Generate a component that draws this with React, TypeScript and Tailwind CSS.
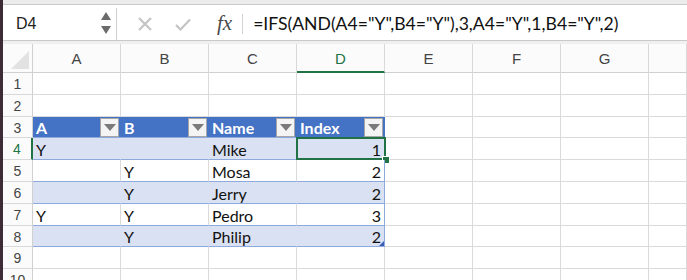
import React from 'react';

const COLS = ['A', 'B', 'C', 'D', 'E', 'F', 'G', 'H'];
const ROW_H = ['h-[22px]', 'h-[22px]', 'h-[21px]', 'h-[22px]', 'h-[22px]', 'h-[22px]', 'h-[22px]', 'h-[21px]', 'h-[22px]', 'h-[22px]'];

type Row = { a: string; b: string; c: string; d: string };
const DATA: Row[] = [
  { a: 'Y', b: '', c: 'Mike', d: '1' },
  { a: '', b: 'Y', c: 'Mosa', d: '2' },
  { a: '', b: 'Y', c: 'Jerry', d: '2' },
  { a: 'Y', b: 'Y', c: 'Pedro', d: '3' },
  { a: '', b: 'Y', c: 'Philip', d: '2' },
];

const cellFont = "font-['Lato','Liberation_Sans',sans-serif] text-[16px] text-[#111] pt-[2px]";

function Dropdown() {
  return (
    <div className="absolute right-[2px] top-[1px] flex h-[19px] w-[19px] items-center justify-center border border-[#a6a6a6] bg-[#f4f4f4]">
      <svg width="12" height="7" viewBox="0 0 12 7">
        <path d="M0 0 L12 0 L6 7 Z" fill="#7a7a7a" />
      </svg>
    </div>
  );
}

function RowHeader({ n, active }: { n: number; active?: boolean }) {
  return (
    <div
      className={`flex w-[30px] shrink-0 items-center justify-center border-b border-[#d9d9d9] bg-[#fbfbfb] pt-[2px] font-['Liberation_Sans',sans-serif] text-[14px] ${
        active ? 'border-r-2 border-r-[#217346] text-[#217346]' : 'border-r border-r-[#d0d0d0] text-[#444]'
      }`}
    >
      {n}
    </div>
  );
}

function EmptyCell({ last }: { last?: boolean }) {
  return <div className={`${last ? 'flex-1' : 'w-[88px]'} shrink-0 border-b border-r border-[#dadada] bg-white`} />;
}

export default function App() {
  return (
    <div className="flex h-[280px] w-[687px] overflow-hidden bg-white">
      <div className="w-[3px] shrink-0 bg-[#3d2b36]" />
      <div className="flex flex-1 flex-col">
        {/* top strip */}
        <div className="h-[5px] shrink-0 border-b border-[#c9c9c9] bg-[#ececec]" />

        {/* formula bar */}
        <div className="flex h-[36px] shrink-0 items-center border-b border-[#c9c9c9] bg-white pt-[3px]">
          <div className="relative flex h-full w-[114px] items-center border-r border-[#cfcfcf] pl-[13px] font-['Liberation_Sans',sans-serif] text-[16px] text-[#222]">
            D4
            <div className="absolute right-[5px] top-[4px] flex flex-col gap-[6px]">
              <svg width="10" height="8" viewBox="0 0 10 8">
                <path d="M5 0 L10 8 L0 8 Z" fill="#6b6b6b" />
              </svg>
              <svg width="10" height="8" viewBox="0 0 10 8">
                <path d="M0 0 L10 0 L5 8 Z" fill="#6b6b6b" />
              </svg>
            </div>
          </div>
          <div className="ml-[21px] flex items-center">
            <svg width="14" height="14" viewBox="0 0 14 14">
              <path d="M1 1 L13 13 M13 1 L1 13" stroke="#c4c4c4" strokeWidth="2.2" />
            </svg>
          </div>
          <div className="ml-[23px] flex items-center">
            <svg width="16" height="13" viewBox="0 0 16 13">
              <path d="M1 7 L5.5 11.5 L15 1.5" stroke="#c4c4c4" strokeWidth="2.2" fill="none" />
            </svg>
          </div>
          <div className="ml-[26px] font-['Liberation_Serif',serif] text-[21px] italic text-[#4a4a4a]">fx</div>
          <div className="ml-[10px] h-[20px] w-px bg-[#d4d4d4]" />
          <div className="ml-[10px] font-['Lato','Liberation_Sans',sans-serif] text-[17.6px] text-[#111]">
            =IFS(AND(A4="Y",B4="Y"),3,A4="Y",1,B4="Y",2)
          </div>
        </div>

        {/* gap */}
        <div className="h-[3px] shrink-0 bg-[#f0f0f0]" />

        {/* column headers */}
        <div className="flex h-[29px] shrink-0">
          <div className="relative w-[30px] shrink-0 border-b border-r border-[#d0d0d0] bg-[#fbfbfb]">
            <svg className="absolute bottom-[3px] right-[3px]" width="18" height="18" viewBox="0 0 18 18">
              <path d="M18 0 L18 18 L0 18 Z" fill="#e2e2e2" />
            </svg>
          </div>
          {COLS.map((c, i) => (
            <div
              key={c}
              className={`${i === 7 ? 'flex-1' : 'w-[88px]'} flex shrink-0 items-center justify-center border-r border-[#d9d9d9] bg-[#fbfbfb] pt-[3px] font-['Liberation_Sans',sans-serif] text-[15px] ${
                c === 'D' ? 'border-b-2 border-b-[#217346] text-[#217346]' : 'border-b border-b-[#d0d0d0] text-[#444]'
              }`}
            >
              {i === 7 ? '' : c}
            </div>
          ))}
        </div>

        {/* rows */}
        {ROW_H.map((h, r) => {
          const n = r + 1;
          const dataIdx = n - 4;
          const row = dataIdx >= 0 && dataIdx < DATA.length ? DATA[dataIdx] : null;
          const banded = row && dataIdx % 2 === 0;

          if (n === 3) {
            return (
              <div key={n} className={`flex ${h} shrink-0`}>
                <RowHeader n={n} />
                {['A', 'B', 'Name', 'Index'].map((t) => (
                  <div
                    key={t}
                    className="relative flex w-[88px] shrink-0 items-center border-b border-[#8ea9db] bg-[#4472c4] pl-[3px] pt-[2px] font-['Lato','Liberation_Sans',sans-serif] text-[16px] font-bold text-white"
                  >
                    {t}
                    <Dropdown />
                  </div>
                ))}
                <EmptyCell />
                <EmptyCell />
                <EmptyCell />
                <EmptyCell last />
              </div>
            );
          }

          if (row) {
            const bg = banded ? 'bg-[#d9e1f2]' : 'bg-white';
            const inner = banded ? 'border-r-transparent' : 'border-r-[#dadada]';
            return (
              <div key={n} className={`flex ${h} shrink-0`}>
                <RowHeader n={n} active={n === 4} />
                {[row.a, row.b, row.c].map((v, k) => (
                  <div
                    key={k}
                    className={`flex w-[88px] shrink-0 items-center border-b border-r border-b-[#8ea9db] ${inner} ${bg} pl-[3px] ${cellFont}`}
                  >
                    {v}
                  </div>
                ))}
                <div
                  className={`relative flex w-[88px] shrink-0 items-center justify-end border-b border-r border-[#8ea9db] ${bg} pr-[3px] ${cellFont}`}
                >
                  {row.d}
                  {n === 4 && (
                    <>
                      <div className="absolute -left-px -top-px bottom-[-1px] right-[-2px] border-2 border-[#217346]" />
                      <div className="absolute bottom-[-4px] right-[-5px] h-[6px] w-[6px] bg-[#217346] outline outline-1 outline-white" />
                    </>
                  )}
                  {n === 8 && (
                    <svg className="absolute bottom-0 right-0" width="5" height="5" viewBox="0 0 5 5">
                      <path d="M5 0 L5 5 L0 5 Z" fill="#3b5fb5" />
                    </svg>
                  )}
                </div>
                <EmptyCell />
                <EmptyCell />
                <EmptyCell />
                <EmptyCell last />
              </div>
            );
          }

          return (
            <div key={n} className={`flex ${h} shrink-0`}>
              <RowHeader n={n} />
              {COLS.map((c, i) => (
                <EmptyCell key={c} last={i === 7} />
              ))}
            </div>
          );
        })}
      </div>
    </div>
  );
}
